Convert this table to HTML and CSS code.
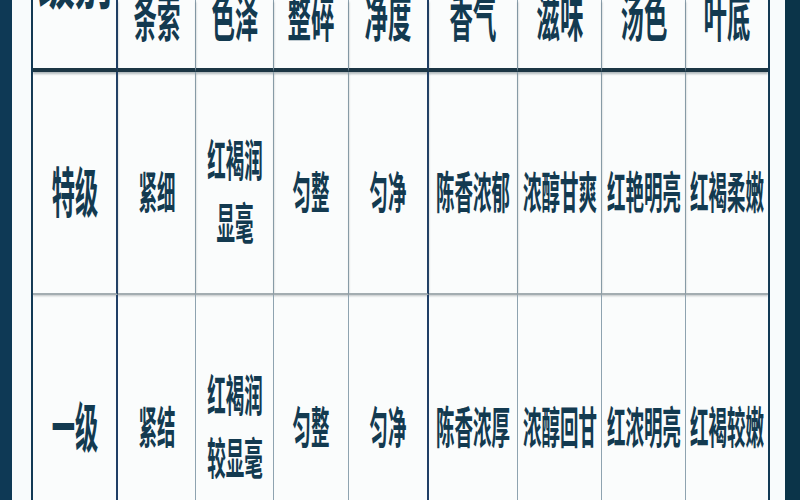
FILE: index.html
```html
<!DOCTYPE html>
<html lang="zh-CN">
<head>
<meta charset="utf-8">
<title>红茶分级</title>
<link rel="stylesheet" href="styles.css">
</head>
<body>
<div class="page">
  <div class="bar bar-left"></div>
  <div class="table">
    <div class="cell head c1 first"><span class="t t-big">级别</span></div>
    <div class="cell head c2"><span class="t t-head">条索</span></div>
    <div class="cell head c3"><span class="t t-head">色泽</span></div>
    <div class="cell head c4"><span class="t t-head">整碎</span></div>
    <div class="cell head c5"><span class="t t-head">净度</span></div>
    <div class="cell head c6"><span class="t t-head">香气</span></div>
    <div class="cell head c7"><span class="t t-head">滋味</span></div>
    <div class="cell head c8"><span class="t t-head">汤色</span></div>
    <div class="cell head c9"><span class="t t-head">叶底</span></div>

    <div class="cell r1 c1"><span class="t t-grade">特级</span></div>
    <div class="cell r1 c2"><span class="t">紧细</span></div>
    <div class="cell r1 c3"><span class="t multi">红褐润<br>显毫</span></div>
    <div class="cell r1 c4"><span class="t">匀整</span></div>
    <div class="cell r1 c5"><span class="t">匀净</span></div>
    <div class="cell r1 c6"><span class="t">陈香浓郁</span></div>
    <div class="cell r1 c7"><span class="t">浓醇甘爽</span></div>
    <div class="cell r1 c8"><span class="t">红艳明亮</span></div>
    <div class="cell r1 c9"><span class="t">红褐柔嫩</span></div>

    <div class="cell r2 c1"><span class="t t-grade">一级</span></div>
    <div class="cell r2 c2"><span class="t">紧结</span></div>
    <div class="cell r2 c3"><span class="t multi">红褐润<br>较显毫</span></div>
    <div class="cell r2 c4"><span class="t">匀整</span></div>
    <div class="cell r2 c5"><span class="t">匀净</span></div>
    <div class="cell r2 c6"><span class="t">陈香浓厚</span></div>
    <div class="cell r2 c7"><span class="t">浓醇回甘</span></div>
    <div class="cell r2 c8"><span class="t">红浓明亮</span></div>
    <div class="cell r2 c9"><span class="t">红褐较嫩</span></div>
  </div>
  <div class="gap"></div>
  <div class="bar bar-right"></div>
</div>
</body>
</html>
```

FILE: styles.css
```css
html, body {
  margin: 0;
  padding: 0;
  width: 800px;
  height: 500px;
  overflow: hidden;
  background: #f8fbfc;
}

.page {
  display: flex;
  width: 800px;
  height: 500px;
}

.bar {
  flex: none;
  height: 500px;
}
.bar-left {
  width: 12px;
  margin-right: 19px;
  background: #0e3955;
}
.bar-right {
  width: 15px;
  background: #0b3449;
}
.gap {
  width: 15px;
  flex: none;
}

.table {
  flex: none;
  display: grid;
  grid-template-columns: 85px 78px 78px 75px 80px 89px 84px 84px 82px;
  grid-template-rows: 72px 223px 260px;
  border-left: 2px solid #123a55;
  border-right: 2px solid #123a55;
  height: 555px;
  background: #fafcfc;
}

.cell {
  box-sizing: border-box;
  display: flex;
  align-items: center;
  justify-content: center;
  border-right: 1px solid #8ea3b0;
  color: #133a50;
  font-family: "Noto Sans CJK SC", "Noto Sans CJK TC", sans-serif;
  font-weight: 700;
  font-size: 44px;
  line-height: 1;
}

.c1, .c5 {
  border-right: 2px solid #1f3f66;
}
.c9 {
  border-right: none;
}

.head {
  align-items: flex-end;
  padding-bottom: 27px;
  border-bottom: 4px solid #1c3644;
  box-shadow: 0 2px 2px rgba(40, 60, 70, 0.35);
}
.head.first {
  padding-bottom: 60px;
}

.r1 {
  padding-top: 14px;
  border-bottom: 2px solid #a3adb1;
  box-shadow: 0 1px 2px rgba(80, 90, 95, 0.35);
}

.t {
  display: inline-block;
  white-space: nowrap;
  text-align: center;
  transform: scaleX(0.42);
  flex: none;
}

.t-head {
  font-size: 52px;
  transform: scaleX(0.45);
}

.t-big {
  font-size: 60px;
  transform: scaleX(0.62);
}

.t-grade {
  font-size: 54px;
  transform: scaleX(0.43);
}

.multi {
  line-height: 63px;
}
```
